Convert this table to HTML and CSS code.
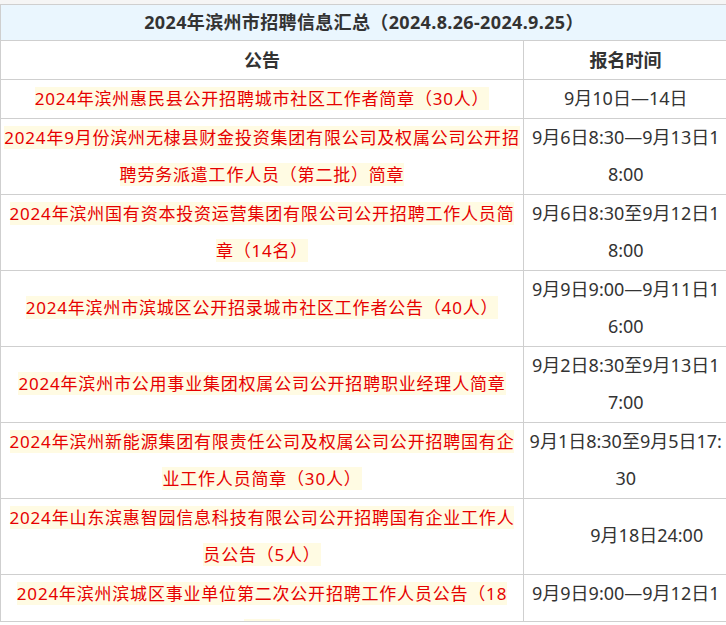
FILE: index.html
```html
<!DOCTYPE html>
<html lang="zh-CN">
<head>
<meta charset="utf-8">
<title>2024年滨州市招聘信息汇总</title>
<link rel="stylesheet" href="styles.css">
</head>
<body>
<div class="frame">
  <table class="jobs">
    <colgroup>
      <col class="c1">
      <col class="c2">
    </colgroup>
    <tr class="title-row">
      <th colspan="2">2024年滨州市招聘信息汇总（2024.8.26-2024.9.25）</th>
    </tr>
    <tr class="head-row">
      <th>公告</th>
      <th>报名时间</th>
    </tr>
    <tr>
      <td class="notice"><span>2024年滨州惠民县公开招聘城市社区工作者简章（30人）</span></td>
      <td class="time">9月10日—14日</td>
    </tr>
    <tr>
      <td class="notice"><span>2024年9月份滨州无棣县财金投资集团有限公司及权属公司公开招聘劳务派遣工作人员（第二批）简章</span></td>
      <td class="time">9月6日8:30—9月13日18:00</td>
    </tr>
    <tr>
      <td class="notice"><span>2024年滨州国有资本投资运营集团有限公司公开招聘工作人员简章（14名）</span></td>
      <td class="time">9月6日8:30至9月12日18:00</td>
    </tr>
    <tr>
      <td class="notice"><span>2024年滨州市滨城区公开招录城市社区工作者公告（40人）</span></td>
      <td class="time">9月9日9:00—9月11日16:00</td>
    </tr>
    <tr>
      <td class="notice"><span>2024年滨州市公用事业集团权属公司公开招聘职业经理人简章</span></td>
      <td class="time">9月2日8:30至9月13日17:00</td>
    </tr>
    <tr>
      <td class="notice"><span>2024年滨州新能源集团有限责任公司及权属公司公开招聘国有企业工作人员简章（30人）</span></td>
      <td class="time">9月1日8:30至9月5日17:30</td>
    </tr>
    <tr>
      <td class="notice"><span>2024年山东滨惠智园信息科技有限公司公开招聘国有企业工作人员公告（5人）</span></td>
      <td class="time"><span class="shift">9月18日24:00</span></td>
    </tr>
    <tr>
      <td class="notice"><span>2024年滨州滨城区事业单位第二次公开招聘工作人员公告（18人）</span></td>
      <td class="time">9月9日9:00—9月12日16:00</td>
    </tr>
  </table>
</div>
</body>
</html>
```

FILE: styles.css
```css
html, body {
  margin: 0;
  padding: 0;
  background: #ffffff;
}

.frame {
  height: 617px;
  padding-top: 4px;
  background: #f5f5f5;
  overflow: hidden;
  border-bottom: 1px solid #cfcfcf;
}

.jobs {
  width: 727px;
  table-layout: fixed;
  border-collapse: collapse;
  background: #ffffff;
  font-family: "Noto Sans", "Noto Sans CJK SC", sans-serif;
  font-size: 17px;
  color: #333333;
}

.c1 { width: 523px; }
.c2 { width: 204px; }

.jobs th,
.jobs td {
  border: 1px solid #cfcfcf;
  padding: 0 3px;
  text-align: center;
  vertical-align: middle;
  word-break: break-all;
}

.title-row th {
  background: #eaf6fe;
  height: 35px;
  line-height: 35px;
  font-weight: bold;
  font-size: 18px;
  letter-spacing: 0.35px;
}

.head-row th {
  height: 38px;
  line-height: 38px;
  font-weight: bold;
  font-size: 18px;
}

.notice {
  line-height: 37.5px;
  letter-spacing: 0.8px;
}

.notice span {
  color: #e60000;
  background: #fffbe3;
}

.time {
  line-height: 37.5px;
  font-size: 18px;
  color: #333333;
}

.jobs td.time {
  padding: 0 4.5px 0 5px;
}

.shift {
  padding-left: 42px;
}
```
